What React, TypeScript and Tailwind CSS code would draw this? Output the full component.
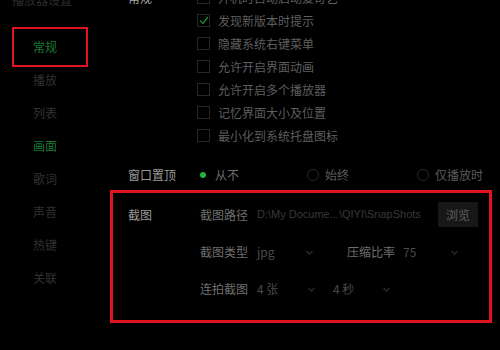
const navItems = ["常规", "播放", "列表", "画面", "歌词", "声音", "热键", "关联"];

const checkRows = [
  { label: "开机时自动启动爱奇艺", checked: false },
  { label: "发现新版本时提示", checked: true },
  { label: "隐藏系统右键菜单", checked: false },
  { label: "允许开启界面动画", checked: false },
  { label: "允许开启多个播放器", checked: false },
  { label: "记忆界面大小及位置", checked: false },
  { label: "最小化到系统托盘图标", checked: false },
];

function Chevron() {
  return (
    <svg width="7" height="5" viewBox="0 0 7 5" className="shrink-0">
      <path d="M0.5 0.8 L3.5 4 L6.5 0.8" fill="none" stroke="#2e2e2e" strokeWidth="1.2" />
    </svg>
  );
}

function Dropdown({ value, width }: { value: string; width: string }) {
  return (
    <div className={`flex h-[25px] items-center justify-between pr-[6px] ${width}`}>
      <span className="text-[#4a4a4a]">{value}</span>
      <Chevron />
    </div>
  );
}

function CheckRow({ label, checked }: { label: string; checked: boolean }) {
  return (
    <div className="flex h-[23px] items-center gap-[8px]">
      <span className="flex h-[13px] w-[13px] items-center justify-center border border-[#262626]">
        {checked && (
          <svg width="10" height="9" viewBox="0 0 10 9">
            <path d="M1 4.5 L4 7.5 L9 1" fill="none" stroke="#1a8a34" strokeWidth="1.3" />
          </svg>
        )}
      </span>
      <span className="text-[#5e5e5e]">{label}</span>
    </div>
  );
}

function Radio({ label, active }: { label: string; active?: boolean }) {
  return (
    <div className="flex w-[110px] items-center gap-[6px]">
      <span
        className={`flex h-[12px] w-[12px] items-center justify-center rounded-full ${
          active ? "" : "border border-[#262626]"
        }`}
      >
        {active && <span className="h-[6px] w-[6px] rounded-full bg-[#22b33c]" />}
      </span>
      <span className={active ? "text-[#6e6e6e]" : "text-[#5a5a5a]"}>{label}</span>
    </div>
  );
}

export default function App() {
  return (
    <div className="flex h-[350px] w-[500px] overflow-hidden bg-black font-['Noto_Sans_CJK_SC',sans-serif] text-[12px] leading-none">
      <aside className="w-[110px] shrink-0">
        <div className="-mt-[10px] flex h-[20px] items-center pl-[12px] text-[#2e2e2e]">播放器设置</div>
        <ul className="mt-[20.5px]">
          {navItems.map((item, i) => (
            <li
              key={item}
              className={`relative flex h-[33px] items-center pl-[33px] ${
                i === 0 || i === 3 ? "text-[#1a7a30]" : "text-[#323232]"
              }`}
            >
              {item}
              {i === 0 && (
                <span className="absolute left-[12px] top-[-3.5px] h-[40px] w-[76px] border-2 border-[#e0141e]" />
              )}
            </li>
          ))}
        </ul>
      </aside>

      <main className="flex-1">
        <section className="-mt-[14px] flex pl-[18px]">
          <div className="flex h-[23px] w-[69px] items-center text-[#a8a8a8]">常规</div>
          <div className="flex flex-col">
            {checkRows.map((row) => (
              <CheckRow key={row.label} label={row.label} checked={row.checked} />
            ))}
          </div>
        </section>

        <section className="mt-[16.5px] flex h-[23px] items-center pl-[18px]">
          <div className="w-[69px] text-[#9a9a9a]">窗口置顶</div>
          <Radio label="从不" active />
          <Radio label="始终" />
          <Radio label="仅播放时" />
        </section>

        <section className="mt-[3.5px] flex h-[133px] w-[382px] border-[3px] border-[#e0141e] pl-[15px] pt-[9px]">
          <div className="flex h-[25px] w-[72px] items-center text-[#9a9a9a]">截图</div>
          <div className="flex flex-col">
            <div className="flex h-[25px] items-center">
              <span className="w-[57px] text-[#6e6e6e]">截图路径</span>
              <span className="w-[181px] whitespace-nowrap font-['Liberation_Sans',sans-serif] text-[11px] text-[#383838]">
                D:\My Docume...\QIYI\SnapShots
              </span>
              <button className="flex h-[25px] w-[40px] items-center justify-center bg-[#171717] text-[#5e5e5e]">
                浏览
              </button>
            </div>
            <div className="mt-[12.5px] flex h-[25px] items-center">
              <span className="w-[57px] text-[#6e6e6e]">截图类型</span>
              <Dropdown value="jpg" width="w-[62px]" />
              <span className="ml-[28px] w-[56px] text-[#6e6e6e]">压缩比率</span>
              <Dropdown value="75" width="w-[61px]" />
            </div>
            <div className="mt-[12px] flex h-[25px] items-center">
              <span className="w-[57px] text-[#6e6e6e]">连拍截图</span>
              <Dropdown value="4 张" width="w-[64px]" />
              <span className="w-[12px]" />
              <Dropdown value="4 秒" width="w-[63px]" />
            </div>
          </div>
        </section>
      </main>
    </div>
  );
}
